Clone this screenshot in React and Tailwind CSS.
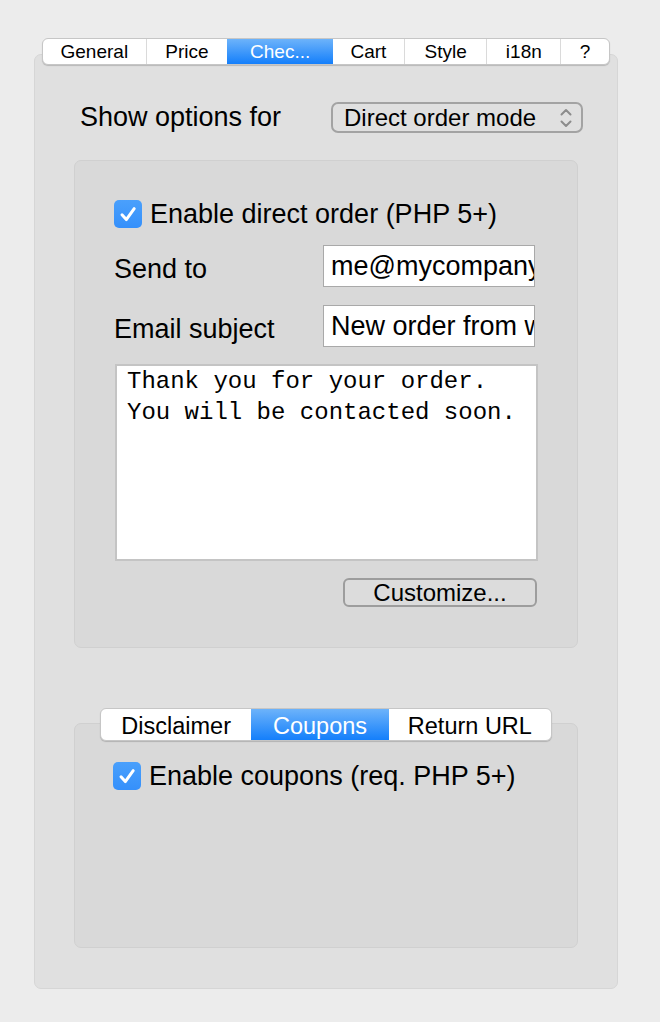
const TOP_TABS = [
  { label: "General", width: 104 },
  { label: "Price", width: 81 },
  { label: "Chec...", width: 106, active: true },
  { label: "Cart", width: 72 },
  { label: "Style", width: 83 },
  { label: "i18n", width: 74 },
  { label: "?", width: 48 },
];

const SUB_TABS = [
  { label: "Disclaimer", width: 151 },
  { label: "Coupons", width: 138, active: true },
  { label: "Return URL", width: 163 },
];

const font = { fontFamily: '"Liberation Sans", Arial, sans-serif' };

const Checkbox = () => (
  <div className="flex h-[28px] w-[28px] shrink-0 items-center justify-center rounded-[5px] bg-[linear-gradient(#4aa0fc,#3590fb)]">
    <svg width="28" height="28" viewBox="0 0 28 28" fill="none">
      <path
        d="M8 14.8 L12.3 19.6 L20.2 8.6"
        stroke="white"
        strokeWidth="3"
        strokeLinecap="round"
        strokeLinejoin="round"
      />
    </svg>
  </div>
);

const Segmented = ({ tabs, className, textClass }) => (
  <div
    className={`relative flex overflow-hidden rounded-[6px] border border-[#c6c6c6] bg-white shadow-[0_1px_1px_rgba(0,0,0,0.18)] ${className}`}
  >
    {tabs.map((tab, i) => {
      const next = tabs[i + 1];
      const divider = !tab.active && next && !next.active;
      return (
        <div
          key={tab.label}
          style={{ width: tab.width }}
          className={`flex items-center justify-center ${textClass} ${
            tab.active ? "bg-[linear-gradient(#6db3fa,#147ffb)] text-white" : "text-black"
          } ${divider ? "border-r border-[#dadada]" : ""}`}
        >
          {tab.label}
        </div>
      );
    })}
  </div>
);

const TextField = ({ value }) => (
  <div className="flex h-[42px] w-[212px] items-center overflow-hidden whitespace-nowrap border border-[#a9a9a9] bg-white pl-[7px] text-[27px] text-black">
    {value}
  </div>
);

export default function App() {
  return (
    <div style={font} className="min-h-[1022px] bg-[#ececec] pl-[34px] pt-[54px]">
      <div className="flex h-[935px] w-[584px] flex-col rounded-[7px] border border-[#d6d6d6] bg-[#e0e0e0]">
        <Segmented tabs={TOP_TABS} className="-mt-[17px] ml-[7px] h-[27px] w-[568px]" textClass="pt-[2px] text-[19px]" />

        <div className="mt-[37px] flex h-[31px] items-center justify-between pl-[45px] pr-[34px]">
          <span className="text-[27px] leading-none text-black">Show options for</span>
          <div className="flex h-[31px] w-[252px] items-center justify-between rounded-[7px] border-2 border-[#a3a3a3] pl-[11px] pr-[8px] text-[24px] leading-none text-black">
            <span>Direct order mode</span>
            <svg width="14" height="22" viewBox="0 0 14 22" fill="none">
              <path d="M2.5 7.5 L7 3 L11.5 7.5" stroke="#8c8c8c" strokeWidth="2" strokeLinecap="round" strokeLinejoin="round" />
              <path d="M2.5 14.5 L7 19 L11.5 14.5" stroke="#8c8c8c" strokeWidth="2" strokeLinecap="round" strokeLinejoin="round" />
            </svg>
          </div>
        </div>

        <div className="ml-[39px] mt-[27px] flex h-[488px] w-[504px] flex-col rounded-[7px] border border-[#d0d0d0] bg-[#d9d9d9] pl-[39px] pt-[39px]">
          <div className="flex h-[28px] items-center gap-[8px]">
            <Checkbox />
            <span className="text-[27px] leading-none text-black">Enable direct order (PHP 5+)</span>
          </div>

          <div className="mt-[17px] flex h-[42px] items-center">
            <span className="w-[209px] pt-[6px] text-[27px] leading-none text-black">Send to</span>
            <TextField value="me@mycompany.com" />
          </div>
          <div className="mt-[18px] flex h-[42px] items-center">
            <span className="w-[209px] pt-[6px] text-[27px] leading-none text-black">Email subject</span>
            <TextField value="New order from website" />
          </div>

          <div className="ml-[1px] mt-[17px] h-[197px] w-[423px] border-2 border-[#c4c4c4] bg-white pl-[10px] font-['Liberation_Mono',monospace] text-[24px] leading-[31px] text-black">
            <div>Thank you for your order.</div>
            <div>You will be contacted soon.</div>
          </div>

          <div className="ml-[229px] mt-[17px] flex h-[29px] w-[194px] items-center justify-center rounded-[6px] border-2 border-[#9d9d9d] bg-[#dcdcdc] text-[24px] leading-none text-black">
            Customize...
          </div>
        </div>

        <div className="ml-[39px] mt-[75px] flex h-[225px] w-[504px] flex-col rounded-[7px] border border-[#d0d0d0] bg-[#d9d9d9]">
          <Segmented tabs={SUB_TABS} className="-mt-[16px] ml-[25px] h-[33px] w-[452px]" textClass="pt-[4px] text-[23.5px]" />
          <div className="ml-[38px] mt-[21px] flex h-[28px] items-center gap-[8px]">
            <Checkbox />
            <span className="text-[27px] leading-none text-black">Enable coupons (req. PHP 5+)</span>
          </div>
        </div>
      </div>
    </div>
  );
}
